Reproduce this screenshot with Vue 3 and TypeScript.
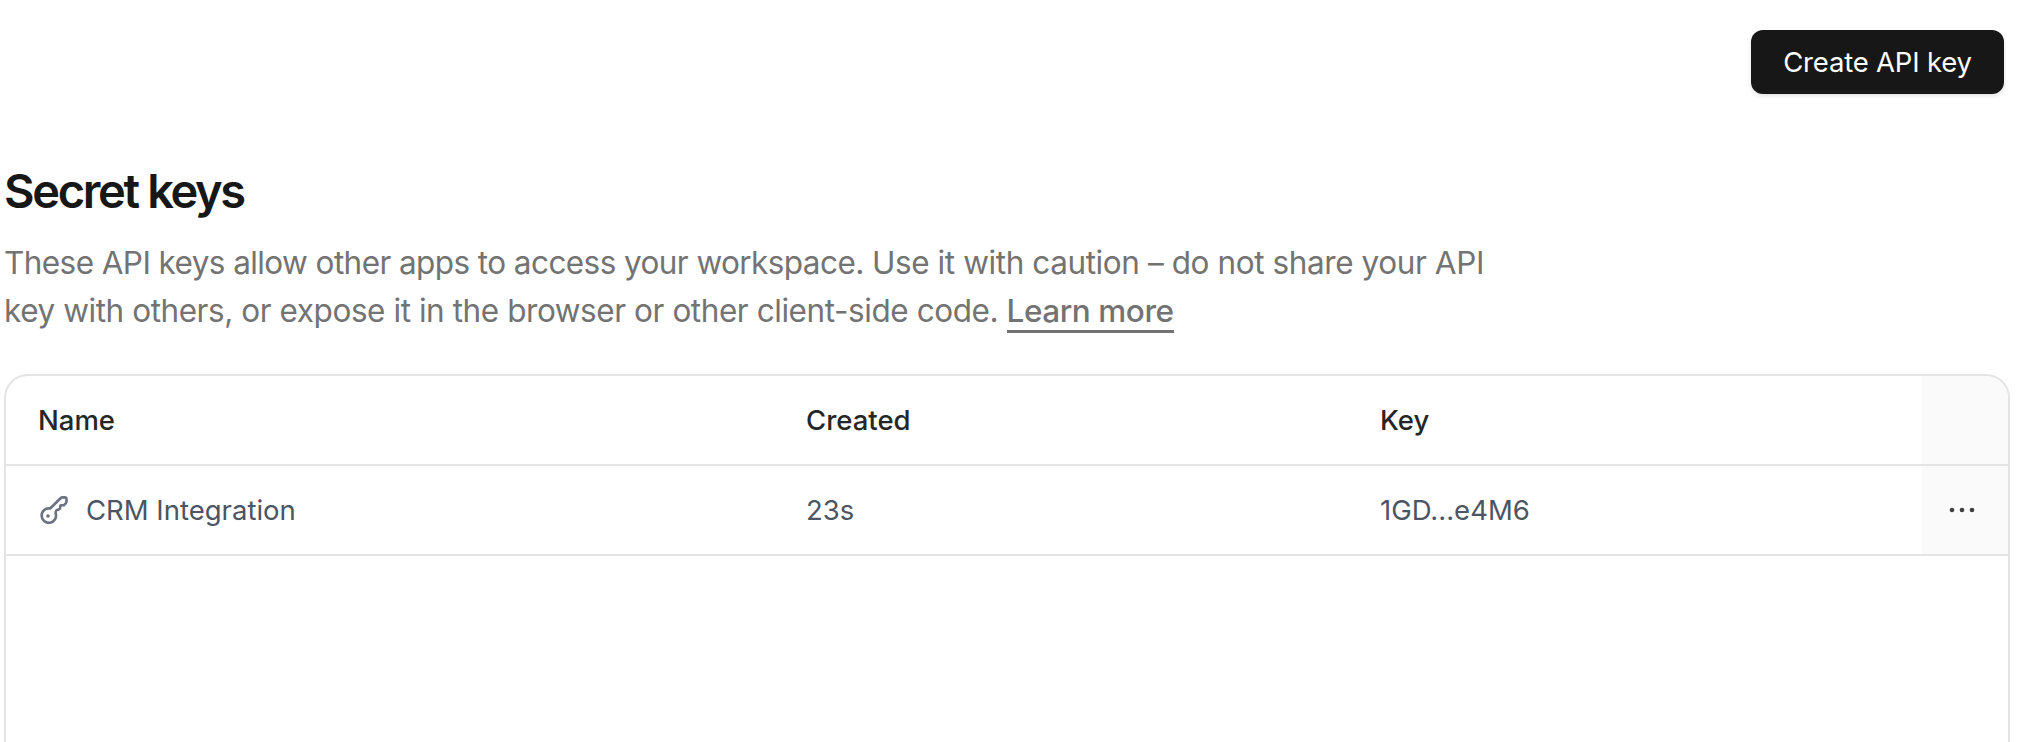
<script setup lang="ts">
interface ApiKey {
  name: string
  created: string
  key: string
}

const keys: ApiKey[] = [{ name: 'CRM Integration', created: '23s', key: '1GD...e4M6' }]
</script>

<template>
  <main class="page">
    <div class="toolbar">
      <button class="create" type="button">Create API key</button>
    </div>

    <h2 class="title">Secret keys</h2>
    <p class="description">
      <span class="line"><span class="lead">These API keys allow other apps to access your workspace. </span><span class="caution">Use it with caution – do not share your API</span></span>
      <span class="line"><span>key with others, or expose it in the browser or other client-side code. </span><a class="link" href="#">Learn more</a></span>
    </p>

    <section class="table">
      <div class="row head">
        <div class="cell">Name</div>
        <div class="cell">Created</div>
        <div class="cell">Key</div>
        <div class="cell actions"></div>
      </div>
      <div v-for="item in keys" :key="item.key" class="row">
        <div class="cell name">
          <svg class="key-icon" viewBox="0 0 28 28" fill="none">
            <path
              d="M10.1 12.5 20.3 2.5Q21.4 1.4 22.9 1.4H24.8Q26.5 1.4 26.5 3V5.4Q26.5 6.6 25.7 7.4L23.8 9.3H21.2Q20.2 9.3 20.2 10.3V11.5Q20.2 12.3 19.6 12.9L18.4 13.7H17.6Q16 13.9 15.9 15.5L15.6 17.2A7.2 7.2 0 1 1 10.1 12.5Z"
              stroke="currentColor"
              stroke-width="2.6"
              stroke-linejoin="round"
            />
            <circle cx="8" cy="20" r="1.8" fill="currentColor" />
          </svg>
          <span>{{ item.name }}</span>
        </div>
        <div class="cell">{{ item.created }}</div>
        <div class="cell">{{ item.key }}</div>
        <div class="cell actions">
          <button class="more" type="button" aria-label="More">
            <svg width="26" height="6" viewBox="0 0 26 6" fill="currentColor">
              <circle cx="3" cy="3" r="2.3" />
              <circle cx="13" cy="3" r="2.3" />
              <circle cx="23" cy="3" r="2.3" />
            </svg>
          </button>
        </div>
      </div>
    </section>
  </main>
</template>

<style>
body {
  background: #fff;
}
</style>

<style scoped>
.page {
  box-sizing: border-box;
  display: flex;
  flex-direction: column;
  height: 742px;
  overflow: hidden;
  padding: 30px 18px 0 4px;
  font-family: Inter, 'Liberation Sans', sans-serif;
}

.toolbar {
  display: flex;
  justify-content: flex-end;
  padding-right: 2px;
}

.create {
  width: 253px;
  height: 64px;
  margin-right: 4px;
  padding: 0;
  border: 0;
  border-radius: 12px;
  background: #171717;
  box-shadow: 0 2px 4px rgba(0, 0, 0, 0.12);
  color: #fff;
  font: 400 27.5px/64px Inter, sans-serif;
  letter-spacing: -0.2px;
}

.title {
  margin: 67px 0 0;
  color: #171717;
  font-size: 47px;
  font-weight: 600;
  line-height: 60px;
  letter-spacing: -2.35px;
}

.description {
  margin: 18px 0 0;
  color: #737373;
  font-size: 31.5px;
  line-height: 48px;
  letter-spacing: -0.435px;
}

.line {
  display: block;
  white-space: pre;
}

.lead {
  letter-spacing: -0.58px;
}

.caution {
  letter-spacing: -0.41px;
}

.link {
  border-bottom: 3px solid #737373;
  color: inherit;
  font-weight: 500;
  text-decoration: none;
}

.table {
  flex: none;
  box-sizing: border-box;
  height: 440px;
  margin-top: 39px;
  overflow: hidden;
  border: 2px solid #e4e4e4;
  border-radius: 24px;
}

.row {
  display: grid;
  grid-template-columns: 768px 574px 574px 86px;
  height: 88px;
  border-bottom: 2px solid #e4e4e4;
  color: #4b5563;
  font-size: 27.5px;
  line-height: 88px;
}

.head {
  color: #262626;
  font-weight: 500;
}

.cell {
  padding-left: 32px;
}

.actions {
  display: flex;
  align-items: center;
  justify-content: center;
  padding: 0 6px 0 0;
  background: #fafafa;
}

.name {
  display: flex;
  align-items: center;
  gap: 18px;
}

.key-icon {
  width: 28px;
  height: 28px;
  margin-left: 2px;
  color: #6b7280;
}

.more {
  display: flex;
  padding: 0;
  border: 0;
  background: none;
  color: #404040;
}
</style>
